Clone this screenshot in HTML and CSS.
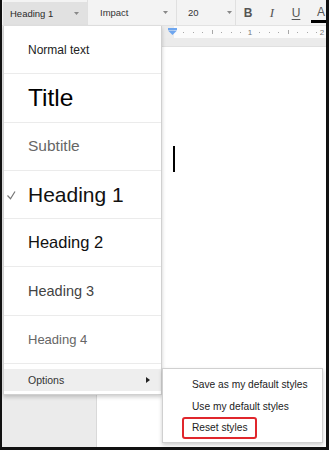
FILE: index.html
```html
<!DOCTYPE html>
<html>
<head>
<meta charset="utf-8">
<link rel="stylesheet" href="styles.css">
</head>
<body>
<div class="frame">
  <div class="toolbar">
    <div class="tb-drop styles">
      <span>Heading 1</span>
      <svg class="caret" width="5" height="3" viewBox="0 0 5 3"><path d="M0 0h5L2.5 3z" fill="#888"/></svg>
    </div>
    <div class="tb-sep"></div>
    <div class="tb-drop font">
      <span>Impact</span>
      <svg class="caret" width="5" height="3" viewBox="0 0 5 3"><path d="M0 0h5L2.5 3z" fill="#888"/></svg>
    </div>
    <div class="tb-sep"></div>
    <div class="tb-drop size">
      <span>20</span>
      <svg class="caret" width="5" height="3" viewBox="0 0 5 3"><path d="M0 0h5L2.5 3z" fill="#888"/></svg>
    </div>
    <div class="tb-sep"></div>
    <div class="tb-icon bold">B</div>
    <div class="tb-icon italic">I</div>
    <div class="tb-icon under">U</div>
    <div class="tb-icon color"><span>A</span><span class="color-bar"></span></div>
  </div>

  <div class="ruler">
    <div class="ruler-gutter"></div>
    <svg class="ruler-strip" width="230" height="12" viewBox="0 0 230 12">
      <rect x="0" y="0" width="78" height="12" fill="#ececec"/>
      <g fill="#a8a8a8">
        <rect x="87" y="6" width="1" height="1"/>
        <rect x="97" y="6" width="1" height="1"/>
        <rect x="106" y="6" width="1" height="1"/>
        <rect x="116" y="4" width="1" height="4"/>
        <rect x="125" y="6" width="1" height="1"/>
        <rect x="135" y="6" width="1" height="1"/>
        <rect x="144" y="6" width="1" height="1"/>
        <rect x="163" y="6" width="1" height="1"/>
        <rect x="173" y="6" width="1" height="1"/>
        <rect x="182" y="6" width="1" height="1"/>
        <rect x="192" y="4" width="1" height="4"/>
        <rect x="201" y="6" width="1" height="1"/>
        <rect x="211" y="6" width="1" height="1"/>
        <rect x="220" y="6" width="1" height="1"/>
      </g>
      <text x="154" y="9" font-family="Liberation Sans, Arial, sans-serif" font-size="8" fill="#777" text-anchor="middle">1</text>
      <text x="226" y="9" font-family="Liberation Sans, Arial, sans-serif" font-size="8" fill="#777" text-anchor="middle">2</text>
      <rect x="72" y="2" width="9" height="2" fill="#6ea6ef"/>
      <path d="M72 4.5h9L76.5 9z" fill="#6ea6ef"/>
    </svg>
  </div>

  <div class="workspace">
    <div class="page"><div class="text-caret"></div></div>
  </div>

  <div class="menu">
    <div class="item normal"><span class="check"></span><span>Normal text</span></div>
    <div class="item title"><span class="check"></span><span>Title</span></div>
    <div class="item subtitle"><span class="check"></span><span>Subtitle</span></div>
    <div class="item h1"><span class="check"><svg width="24" height="12" viewBox="0 0 24 12"><path d="M3.5 6.5l3 3.2L11 2.5" fill="none" stroke="#777" stroke-width="1.2"/></svg></span><span>Heading 1</span></div>
    <div class="item h2"><span class="check"></span><span>Heading 2</span></div>
    <div class="item h3"><span class="check"></span><span>Heading 3</span></div>
    <div class="item h4"><span class="check"></span><span>Heading 4</span></div>
    <div class="options">
      <span class="check"></span><span class="opt-label">Options</span>
      <svg class="opt-arrow" width="4" height="6" viewBox="0 0 4 6"><path d="M0 0l4 3-4 3z" fill="#222"/></svg>
    </div>
  </div>

  <div class="submenu">
    <div class="sub-item">Save as my default styles</div>
    <div class="sub-item">Use my default styles</div>
    <div class="sub-item"><span class="reset">Reset styles</span></div>
  </div>
</div>
</body>
</html>
```

FILE: styles.css
```css
* { box-sizing: border-box; }
html, body { margin: 0; padding: 0; }
body {
  width: 329px;
  height: 450px;
  overflow: hidden;
  font-family: "Liberation Sans", Arial, sans-serif;
  background: #fff;
}
.frame {
  position: relative;
  width: 329px;
  height: 450px;
  border-left: 2px solid #111;
  border-right: 3px solid #111;
  border-bottom: 3px solid #111;
  display: flex;
  flex-direction: column;
  overflow: hidden;
  background: #ebebeb;
}

/* toolbar */
.toolbar {
  height: 26px;
  flex: none;
  display: flex;
  align-items: stretch;
  background: #f3f3f3;
  border-bottom: 1px solid #e2e2e2;
  font-size: 9.5px;
  color: #333;
  overflow: hidden;
}
.toolbar > * { flex: none; }
.tb-drop {
  display: flex;
  align-items: center;
  justify-content: space-between;
}
.styles {
  width: 84px;
  margin: 2px 0 0 1px;
  padding: 0 8px 0 7px;
  background: #e1e1e1;
  color: #2a2a2a;
}
.font { width: 88px; padding: 0 8px 0 12px; }
.size { width: 58px; padding: 0 3px 0 11px; }
.tb-sep { width: 1px; background: #e0e0e0; }
.tb-icon {
  width: 24px;
  display: flex;
  align-items: center;
  justify-content: center;
  color: #555;
  font-size: 12px;
}
.bold { font-weight: bold; }
.italic { font-family: "Liberation Serif", serif; font-style: italic; font-size: 13px; }
.under { text-decoration: underline; text-decoration-thickness: 1px; text-underline-offset: 2px; }
.color {
  flex-direction: column;
  justify-content: center;
  align-items: flex-start;
  gap: 1px;
  padding-top: 3px;
}
.color span:first-child { margin-left: 9px; }
.color-bar {
  width: 18px;
  height: 3px;
  background: #000;
  margin-left: 3px;
}

/* ruler */
.ruler {
  height: 12px;
  flex: none;
  display: flex;
  background: #fbfbfb;
}
.ruler-gutter { width: 94px; background: #ebebeb; }
.ruler-strip { display: block; }

/* canvas */
.workspace {
  flex: 1;
  display: flex;
  padding: 8px 0 0 94px;
  background: #ebebeb;
}
.page {
  flex: 1;
  background: #fff;
  border-left: 1px solid #d9d9d9;
  border-top: 1px solid #e0e0e0;
  padding: 99px 0 0 76px;
}
.text-caret {
  width: 2px;
  height: 26px;
  background: #000;
}

/* styles menu */
.menu {
  position: absolute;
  left: 1px;
  top: 26px;
  width: 159px;
  height: 369px;
  background: #fff;
  border: 1px solid #d0d0d0;
  border-top: none;
  box-shadow: 0 2px 4px rgba(0,0,0,0.2);
  display: flex;
  flex-direction: column;
}
.item {
  height: 48.3px;
  flex: none;
  display: flex;
  align-items: center;
  border-bottom: 1px solid #ebebeb;
  white-space: nowrap;
}
.check {
  width: 24px;
  flex: none;
  display: flex;
  align-items: center;
}
.check svg { display: block; }
.normal { font-size: 12px; color: #222; }
.title { font-size: 24.5px; color: #000; }
.subtitle { font-size: 15.5px; color: #666; }
.h1 { font-size: 21px; color: #111; }
.h2 { font-size: 16.5px; color: #111; }
.h3 { font-size: 14.5px; color: #434343; }
.h4 { font-size: 13px; color: #666; }
.options {
  margin-top: 5px;
  height: 22px;
  display: flex;
  align-items: center;
  background: #eeeeee;
  font-size: 10.5px;
  color: #333;
}
.opt-label { flex: 1; }
.opt-arrow { margin-right: 11px; }

/* sub menu */
.submenu {
  position: absolute;
  left: 160px;
  top: 368px;
  width: 161px;
  height: 75px;
  background: #fff;
  border: 1px solid #d0d0d0;
  box-shadow: 0 2px 4px rgba(0,0,0,0.2);
  padding: 4px 0 0 29px;
  font-size: 10.2px;
  color: #222;
}
.sub-item {
  height: 22px;
  display: flex;
  align-items: center;
  white-space: nowrap;
}
.reset {
  border: 2px solid #e0262c;
  border-radius: 3px;
  padding: 2px 8px;
  margin-left: -10px;
  line-height: 14px;
}
```
